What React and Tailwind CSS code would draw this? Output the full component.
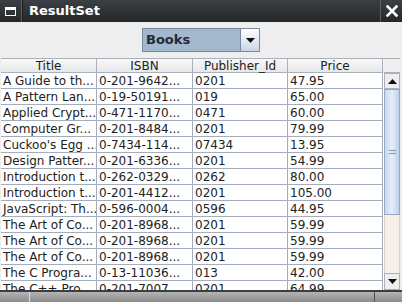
import React from 'react';

const rows = [
  ['A Guide to th...', '0-201-9642...', '0201', '47.95'],
  ['A Pattern Lan...', '0-19-50191...', '019', '65.00'],
  ['Applied Crypt...', '0-471-1170...', '0471', '60.00'],
  ['Computer Gr...', '0-201-8484...', '0201', '79.99'],
  ["Cuckoo's Egg ...", '0-7434-114...', '07434', '13.95'],
  ['Design Patter...', '0-201-6336...', '0201', '54.99'],
  ['Introduction t...', '0-262-0329...', '0262', '80.00'],
  ['Introduction t...', '0-201-4412...', '0201', '105.00'],
  ['JavaScript: Th...', '0-596-0004...', '0596', '44.95'],
  ['The Art of Co...', '0-201-8968...', '0201', '59.99'],
  ['The Art of Co...', '0-201-8968...', '0201', '59.99'],
  ['The Art of Co...', '0-201-8968...', '0201', '59.99'],
  ['The C Progra...', '0-13-11036...', '013', '42.00'],
  ['The C++ Pro...', '0-201-7007...', '0201', '64.99'],
];

const headers = ['Title', 'ISBN', 'Publisher_Id', 'Price'];
const widths = ['w-[96px]', 'w-[96px]', 'w-[95px]', 'w-[95px]'];

export default function App() {
  return (
    <div className="w-[402px] h-[302px] bg-[#eeeeee] flex flex-col overflow-hidden font-['DejaVu_Sans',sans-serif] text-[#222222]">
      {/* Title bar */}
      <div className="h-[22px] flex bg-gradient-to-b from-[#3c4044] to-[#25282b] shrink-0">
        <div className="w-[22px] h-full flex items-center justify-center border-r border-[#5a5e62]">
          <div className="w-[11px] h-[9px] border border-white border-t-[3px]" />
        </div>
        <div className="flex-1 flex items-center pl-[6px] text-white font-bold text-[13px] font-['DejaVu_Sans',sans-serif] border-l border-[#1a1c1e]">
          ResultSet
        </div>
        <div className="w-[22px] h-full flex items-center justify-center border-l border-[#5a5e62]">
          <svg width="12" height="12" viewBox="0 0 12 12">
            <path d="M1.5 1.5 L10.5 10.5 M10.5 1.5 L1.5 10.5" stroke="white" strokeWidth="2.6" strokeLinecap="square" />
          </svg>
        </div>
      </div>

      {/* Combobox */}
      <div className="flex justify-center pt-[6px] pb-[6px] shrink-0">
        <div className="w-[118px] h-[24px] flex border border-[#7a8a9e] ml-[-0px]">
          <div className="flex-1 bg-[#a3b8cc] flex items-center pl-[3px] font-bold text-[13px] text-[#1f2a36] border-r border-[#7a8a9e]">
            Books
          </div>
          <div className="w-[18px] bg-gradient-to-b from-[#ffffff] to-[#c8d6e6] flex items-center justify-center">
            <svg width="9" height="5" viewBox="0 0 9 5"><path d="M0 0 L9 0 L4.5 5 Z" fill="#111" /></svg>
          </div>
        </div>
      </div>

      {/* Table */}
      <div className="flex-1 flex min-h-0 pl-[1px] pr-[2px]">
        <div className="flex flex-col w-[383px] overflow-hidden">
          <div className="flex h-[15px] shrink-0 border-t border-[#a9b1bd] bg-gradient-to-b from-[#f8f8f8] to-[#e6e6e6]">
            {headers.map((h, i) => (
              <div key={h} className={`${widths[i]} shrink-0 h-full border-r border-b border-[#a9b1bd] flex items-center justify-center text-[12px] leading-none`}>
                {h}
              </div>
            ))}
          </div>
          {rows.map((r, ri) => (
            <div key={ri} className="flex h-[16px] shrink-0 bg-white">
              {r.map((c, ci) => (
                <div key={ci} className={`${widths[ci]} shrink-0 h-full border-r border-b border-[#a4adbb] pl-[2px] flex items-center text-[12px] leading-none whitespace-nowrap overflow-hidden`}>
                  {c}
                </div>
              ))}
            </div>
          ))}
        </div>
        {/* Scrollbar */}
        <div className="w-[16px] flex flex-col">
          <div className="h-[15px] border-t border-b border-[#a9b1bd] bg-[#eeeeee] shrink-0" />
          <div className="h-[16px] shrink-0 bg-[#eeeeee] border border-[#aab2bf] flex items-center justify-center">
            <svg width="9" height="5" viewBox="0 0 9 5"><path d="M0 5 L9 5 L4.5 0 Z" fill="#111" /></svg>
          </div>
          <div className="h-[126px] shrink-0 bg-gradient-to-r from-[#c7d8ee] via-[#e4eefa] to-[#bcd0ea] border border-[#97a8c2] flex items-center justify-center">
            <div className="flex flex-col gap-[2px]">
              <div className="w-[7px] h-[1px] bg-[#8298b8]" />
              <div className="w-[7px] h-[1px] bg-[#8298b8]" />
            </div>
          </div>
          <div className="flex-1 bg-[#f6efe9] border-x border-[#d8d0c8]" />
          <div className="h-[17px] shrink-0 bg-[#eeeeee] border border-[#aab2bf] flex items-center justify-center">
            <svg width="9" height="5" viewBox="0 0 9 5"><path d="M0 0 L9 0 L4.5 5 Z" fill="#111" /></svg>
          </div>
        </div>
      </div>

      {/* Bottom frame */}
      <div className="h-[12px] shrink-0 border-t-2 border-[#3a3e42] bg-gradient-to-b from-[#b4b4b4] to-[#8c8c8c] flex">
        <div className="w-[30px] border-r border-[#e0e0e0]" />
        <div className="flex-1" />
        <div className="w-[28px] border-l border-[#505050]" />
      </div>
    </div>
  );
}
